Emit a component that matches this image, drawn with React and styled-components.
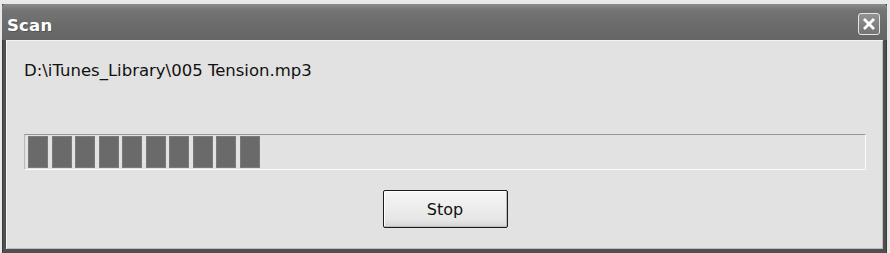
import React from "react";
import styled, { createGlobalStyle } from "styled-components";

const Global = createGlobalStyle`
  html, body { margin: 0; padding: 0; }
  body {
    background: #e9e9e9;
    width: 890px;
    height: 253px;
    overflow: hidden;
    font-family: "DejaVu Sans", Verdana, sans-serif;
  }
`;

const Window = styled.div`
  margin: 4px 3px 0 2px;
  height: 249px;
  display: flex;
  flex-direction: column;
  background: #4f4f4f;
  box-shadow: inset 1px 0 0 #3a3a3a, inset -1px 0 0 #3a3a3a;
`;

const TitleBar = styled.div`
  height: 36px;
  flex: none;
  display: flex;
  align-items: flex-start;
  justify-content: space-between;
  padding: 0 7px 0 5px;
  background: linear-gradient(#8c8c8c 0%, #747474 18%, #6b6b6b 60%, #666 100%);
  border-radius: 3px 3px 0 0;
`;

const Title = styled.span`
  color: #fff;
  font-weight: bold;
  font-size: 16.5px;
  line-height: 19px;
  letter-spacing: 0.2px;
  text-shadow: 1px 1px 0 #555;
  margin-top: 12px;
`;

const CloseButton = styled.div`
  width: 20px;
  height: 20px;
  border: 1px solid #e4e4e4;
  border-radius: 3px;
  background: linear-gradient(#929292, #747474);
  display: flex;
  align-items: center;
  justify-content: center;
  margin-top: 9px;
`;

const Body = styled.div`
  flex: 1;
  margin: 0 4px 4px 4px;
  background: #e2e2e2;
  box-shadow: inset 1px 1px 0 #f4f4f4, inset -1px -1px 0 #bdbdbd;
  padding: 21px 17px 0 18px;
  display: flex;
  flex-direction: column;
`;

const Path = styled.div`
  font-size: 16.5px;
  line-height: 19px;
  color: #111;
`;

const Progress = styled.div`
  margin-top: 54px;
  height: 36px;
  box-sizing: border-box;
  border-top: 1px solid #979797;
  border-left: 1px solid #b8b8b8;
  border-right: 1px solid #fafafa;
  border-bottom: 1px solid #fafafa;
  padding: 1px 3px;
  display: flex;
  background: #e2e2e2;
`;

const Block = styled.div`
  width: 20px;
  height: 32px;
  flex: none;
  margin-right: 3.5px;
  background: #6a6a6a;
  box-shadow: inset 0 0 0 1px #7a7a7a;
`;

const ButtonRow = styled.div`
  display: flex;
  justify-content: center;
  margin-top: 20px;
`;

const Button = styled.button`
  width: 125px;
  height: 38px;
  box-sizing: border-box;
  border: 1px solid #1c1c1c;
  border-radius: 2px;
  background: linear-gradient(#f6f6f6, #e6e6e6 80%, #d4d4d4);
  box-shadow: inset -1px -1px 0 #bcbcbc, inset 1px 1px 0 #ffffff;
  font-family: "DejaVu Sans", Verdana, sans-serif;
  font-size: 16px;
  color: #111;
  padding: 0;
`;

export default function App() {
  const blocks = Array.from({ length: 10 });
  return (
    <>
      <Global />
      <Window>
        <TitleBar>
          <Title>Scan</Title>
          <CloseButton>
            <svg width="14" height="14" viewBox="0 0 14 14">
              <path d="M3 3 L11 11 M11 3 L3 11" stroke="#fff" strokeWidth="2.8" strokeLinecap="square" />
            </svg>
          </CloseButton>
        </TitleBar>
        <Body>
          <Path>D:\iTunes_Library\005 Tension.mp3</Path>
          <Progress>
            {blocks.map((_, i) => (
              <Block key={i} />
            ))}
          </Progress>
          <ButtonRow>
            <Button>Stop</Button>
          </ButtonRow>
        </Body>
      </Window>
    </>
  );
}
